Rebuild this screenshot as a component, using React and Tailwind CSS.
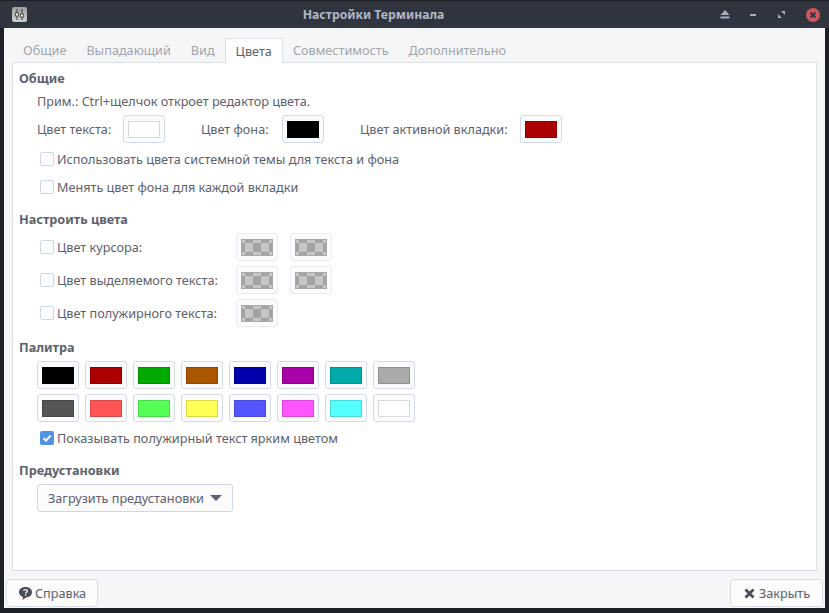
import React from "react";

const font = { fontFamily: '"Noto Sans", sans-serif' };

const paletteTop = ["#000000", "#aa0000", "#00aa00", "#aa5500", "#0000aa", "#aa00aa", "#00aaaa", "#aaaaaa"];
const paletteBottom = ["#555555", "#ff5555", "#55ff55", "#ffff55", "#5555ff", "#ff55ff", "#55ffff", "#ffffff"];
const tabs = ["Общие", "Выпадающий", "Вид", "Цвета", "Совместимость", "Дополнительно"];

function Swatch({ color }) {
  return (
    <div className="w-[42px] h-[28px] shrink-0 rounded-[3px] border border-[#d5dae6] bg-[#fafbfc] flex items-center justify-center">
      <div className="w-[32px] h-[17px] border border-black/15" style={{ backgroundColor: color }} />
    </div>
  );
}

function Checker() {
  return (
    <div className="w-[42px] h-[28px] shrink-0 rounded-[3px] border border-[#e9ebf0] bg-[#fafbfc] flex items-center justify-center">
      <svg width="32" height="17" viewBox="0 0 32 17">
        <rect width="32" height="17" fill="#a3a3a3" />
        <rect x="0" y="0" width="4" height="4" fill="#c6c6c6" />
        <rect x="12" y="0" width="8" height="4" fill="#c6c6c6" />
        <rect x="28" y="0" width="4" height="4" fill="#c6c6c6" />
        <rect x="4" y="4" width="8" height="9" fill="#c6c6c6" />
        <rect x="20" y="4" width="8" height="9" fill="#c6c6c6" />
        <rect x="0" y="13" width="4" height="4" fill="#c6c6c6" />
        <rect x="12" y="13" width="8" height="4" fill="#c6c6c6" />
        <rect x="28" y="13" width="4" height="4" fill="#c6c6c6" />
        <rect x="0.5" y="0.5" width="31" height="16" fill="none" stroke="#a8a8a8" />
      </svg>
    </div>
  );
}

function Check({ checked, label }) {
  return (
    <div className="flex items-center">
      {checked ? (
        <div className="w-[14px] h-[14px] rounded-[2px] bg-[#5294e2] flex items-center justify-center">
          <svg width="10" height="10" viewBox="0 0 10 10">
            <path d="M1.5 5.2 L4 7.6 L8.6 2.6" fill="none" stroke="#fff" strokeWidth="2" />
          </svg>
        </div>
      ) : (
        <div className="w-[14px] h-[14px] rounded-[2px] border border-[#cfd6e6] bg-[#fbfcfd]" />
      )}
      <span className="ml-[3px] text-[#5c616c]">{label}</span>
    </div>
  );
}

function Heading({ children, className }) {
  return <div className={`font-bold text-[#5c616c] leading-[18px] ${className}`}>{children}</div>;
}

export default function App() {
  return (
    <div className="w-[829px] h-[613px] bg-[#1d2027] overflow-hidden pt-[1px] text-[12.67px] leading-[18px]" style={font}>
      {/* title bar */}
      <div className="h-[27px] bg-[#2f343f] flex items-center relative">
        <div className="ml-[12px] w-[15px] h-[15px] rounded-[2px] bg-gradient-to-b from-[#9c9c9c] to-[#d0d0d0] flex items-center justify-center">
          <svg width="13" height="13" viewBox="0 0 13 13">
            <path d="M4 1 V12 M9 1 V12" stroke="#3a3a3a" strokeWidth="1" />
            <rect x="2.5" y="5" width="3" height="3" fill="#f2f2f2" stroke="#3a3a3a" strokeWidth="0.8" />
            <rect x="7.5" y="6" width="3" height="3" fill="#f2f2f2" stroke="#3a3a3a" strokeWidth="0.8" />
          </svg>
        </div>
        <div className="flex-1 text-center font-bold text-[#afb8c6] text-[12.2px]">Настройки Терминала</div>
        <svg width="10" height="9" viewBox="0 0 10 9" className="mr-[20px]">
          <path d="M5 0 L9.5 5 H0.5 Z" fill="#a8afbd" />
          <rect x="0.5" y="6.5" width="9" height="2" fill="#a8afbd" />
        </svg>
        <div className="w-[6px] h-[2px] bg-[#a8afbd] mr-[22px]" />
        <svg width="7" height="7" viewBox="0 0 7 7" className="mr-[21px]">
          <path d="M0 7 V3 L4 7 Z M7 0 V4 L3 0 Z" fill="#a8afbd" />
        </svg>
        <div className="w-[14px] h-[14px] rounded-full bg-[#cc575d] flex items-center justify-center mr-[9px]">
          <svg width="8" height="8" viewBox="0 0 8 8">
            <path d="M1.5 1.5 L6.5 6.5 M6.5 1.5 L1.5 6.5" stroke="#2f343f" strokeWidth="1.8" />
          </svg>
        </div>
      </div>

      {/* window body */}
      <div className="mx-[4px] h-[580px] bg-[#f5f6f7] px-[8px] pt-[10px] flex flex-col">
        <div className="flex h-[24px] items-end relative z-10 pl-[1px]">
          {tabs.map((t) =>
            t === "Цвета" ? (
              <div key={t} className="h-[25px] -mb-px px-[10px] bg-white border border-b-0 border-[#dde1ea] text-[#5c616c] flex items-center">
                {t}
              </div>
            ) : (
              <div key={t} className="h-[24px] px-[10px] text-[#a1a5ad] flex items-center">
                {t}
              </div>
            )
          )}
        </div>

        <div className="h-[509px] bg-white border border-[#dcdfe3] pl-[6px] pt-[6px]">
          <Heading>Общие</Heading>
          <div className="mt-[5px] pl-[18px] text-[#5c616c]">Прим.: Ctrl+щелчок откроет редактор цвета.</div>
          <div className="mt-[5px] pl-[18px] h-[28px] flex items-center text-[#5c616c]">
            <span className="w-[86px]">Цвет текста:</span>
            <Swatch color="#ffffff" />
            <span className="ml-[36px] w-[81px]">Цвет фона:</span>
            <Swatch color="#000000" />
            <span className="ml-[36px] w-[160px]">Цвет активной вкладки:</span>
            <Swatch color="#aa0000" />
          </div>
          <div className="mt-[7px] pl-[21px]">
            <Check label="Использовать цвета системной темы для текста и фона" />
          </div>
          <div className="mt-[10px] pl-[21px]">
            <Check label="Менять цвет фона для каждой вкладки" />
          </div>

          <Heading className="mt-[14px]">Настроить цвета</Heading>
          <div className="mt-[5px] pl-[21px] flex flex-col gap-[5px]">
            <div className="h-[28px] flex items-center">
              <div className="w-[196px]"><Check label="Цвет курсора:" /></div>
              <Checker />
              <div className="w-[12px]" />
              <Checker />
            </div>
            <div className="h-[28px] flex items-center">
              <div className="w-[196px]"><Check label="Цвет выделяемого текста:" /></div>
              <Checker />
              <div className="w-[12px]" />
              <Checker />
            </div>
            <div className="h-[28px] flex items-center">
              <div className="w-[196px]"><Check label="Цвет полужирного текста:" /></div>
              <Checker />
            </div>
          </div>

          <Heading className="mt-[11px]">Палитра</Heading>
          <div className="mt-[5px] pl-[18px] flex gap-[6px]">
            {paletteTop.map((c) => <Swatch key={c} color={c} />)}
          </div>
          <div className="mt-[5px] pl-[18px] flex gap-[6px]">
            {paletteBottom.map((c) => <Swatch key={c} color={c} />)}
          </div>
          <div className="mt-[7px] pl-[21px]">
            <Check checked label="Показывать полужирный текст ярким цветом" />
          </div>

          <Heading className="mt-[14px]">Предустановки</Heading>
          <div className="mt-[5px] pl-[18px]">
            <div className="w-[196px] h-[28px] rounded-[3px] border border-[#cfd6e6] bg-[#fbfbfc] flex items-center pl-[10px] text-[#5c616c]">
              Загрузить предустановки
              <svg width="12" height="6" viewBox="0 0 12 6" className="ml-[6px]">
                <path d="M0 0 H12 L6 6 Z" fill="#5c616c" />
              </svg>
            </div>
          </div>
        </div>

        <div className="flex justify-between -mx-[6px] mt-[8px]">
          <div className="w-[92px] h-[28px] rounded-[3px] border border-[#d8dde8] bg-[#fbfbfc] flex items-center pl-[11px] text-[#5c616c]">
            <svg width="15" height="15" viewBox="0 0 15 15" className="mr-[2px]">
              <path d="M7.5 1 C11.5 1 14 3.2 14 6.2 C14 9.2 11.5 11.4 8 11.4 L4.5 14 L5 10.9 C2.6 10.1 1 8.4 1 6.2 C1 3.2 3.5 1 7.5 1 Z" fill="#4a4e57" />
              <path d="M5.6 4.8 C5.8 3.4 9.4 3.2 9.4 5 C9.4 6.2 7.6 6.2 7.6 7.4" fill="none" stroke="#f5f6f7" strokeWidth="1.3" />
              <rect x="6.9" y="8.2" width="1.4" height="1.4" fill="#f5f6f7" />
            </svg>
            Справка
          </div>
          <div className="w-[93px] h-[28px] rounded-[3px] border border-[#d8dde8] bg-[#fbfbfc] flex items-center pl-[13px] text-[#5c616c]">
            <svg width="11" height="11" viewBox="0 0 11 11" className="mr-[4px]">
              <path d="M1.5 1.5 L9.5 9.5 M9.5 1.5 L1.5 9.5" stroke="#4a4e57" strokeWidth="2.8" />
            </svg>
            Закрыть
          </div>
        </div>
      </div>
    </div>
  );
}
